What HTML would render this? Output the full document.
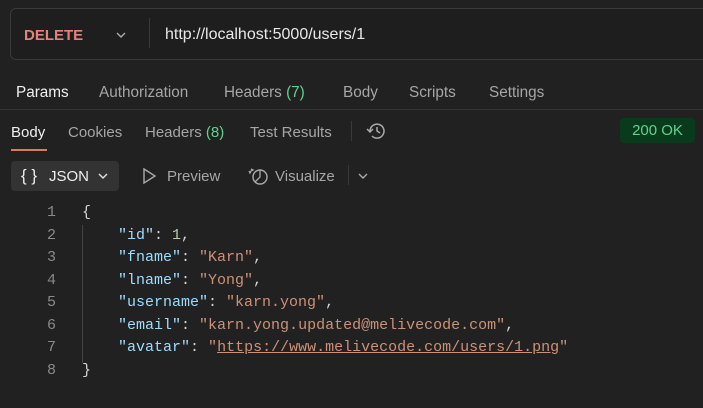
<!DOCTYPE html>
<html><head><style>
*{margin:0;padding:0;box-sizing:border-box}
body{width:703px;height:408px;background:#212121;font-family:"Liberation Sans",sans-serif;color:#a6a6a6;position:relative;overflow:hidden;font-size:15px}
.a{position:absolute;white-space:nowrap}
.urlbox{position:absolute;left:10px;top:8px;width:720px;height:52px;border:1px solid #3a3a3a;border-radius:6px;background:#1e1e1e}
.mono{font-family:"Liberation Mono",monospace;font-size:15px}
.ln{color:#8a8a8a;text-align:right;width:20px}
.k{color:#9cdcfe}.s{color:#ce9178}.n{color:#b5cea8}.p{color:#d4d4d4}
</style></head><body>
<div class="urlbox"></div>
<div class="a" style="left:24px;top:27px;color:#e5837a;font-weight:bold;font-size:15px">DELETE</div>
<svg class="a" style="left:115px;top:30px" width="12" height="10"><path d="M2 3l4 4 4-4" stroke="#aaa" fill="none" stroke-width="1.4"/></svg>
<div class="a" style="left:149px;top:18px;width:1px;height:30px;background:#3a3a3a"></div>
<div class="a" style="left:165px;top:26px;color:#e8e8e8;font-size:16px">http://localhost:5000/users/1</div>

<div class="a" style="left:16px;top:84px;color:#f0f0f0;font-size:15.3px">Params</div>
<div class="a" style="left:99px;top:84px;font-size:15.3px">Authorization</div>
<div class="a" style="left:224px;top:84px;font-size:15.3px">Headers <span style="color:#5fd38d">(7)</span></div>
<div class="a" style="left:343px;top:84px;font-size:15.3px">Body</div>
<div class="a" style="left:409px;top:84px;font-size:15.3px">Scripts</div>
<div class="a" style="left:489px;top:84px;font-size:15.3px">Settings</div>
<div class="a" style="left:0;top:109px;width:703px;height:1px;background:#333"></div>

<div class="a" style="left:11px;top:124px;color:#f0f0f0">Body</div>
<div class="a" style="left:11px;top:149px;width:36px;height:2px;background:#e0795a"></div>
<div class="a" style="left:68px;top:124px">Cookies</div>
<div class="a" style="left:145px;top:124px">Headers <span style="color:#5fd38d">(8)</span></div>
<div class="a" style="left:250px;top:124px">Test Results</div>
<div class="a" style="left:351px;top:121px;width:1px;height:20px;background:#3a3a3a"></div>
<svg class="a" style="left:366px;top:121px" width="22" height="20" viewBox="0 0 22 20"><path d="M4 10a7 7 0 1 1 2 5" stroke="#aaa" fill="none" stroke-width="1.5"/><path d="M1 8l3 3 3-3" stroke="#aaa" fill="none" stroke-width="1.5"/><path d="M11 6v4l3 2" stroke="#aaa" fill="none" stroke-width="1.5"/></svg>
<div class="a" style="left:620px;top:118px;width:75px;height:25px;background:#0a3a1c;border-radius:4px;color:#5fd38d;text-align:center;line-height:26px">200 OK</div>

<div class="a" style="left:11px;top:161px;width:108px;height:30px;background:#333;border-radius:4px"></div>
<div class="a" style="left:21px;top:166px;color:#eee;font-size:17px">{ }</div>
<div class="a" style="left:49px;top:168px;color:#eee;font-size:15px">JSON</div>
<svg class="a" style="left:97px;top:171px" width="12" height="10"><path d="M2 3l4 4 4-4" stroke="#ddd" fill="none" stroke-width="1.5"/></svg>
<svg class="a" style="left:141px;top:167px" width="16" height="18"><path d="M3 2l11 7-11 7z" stroke="#aaa" fill="none" stroke-width="1.4"/></svg>
<div class="a" style="left:167px;top:168px">Preview</div>
<svg class="a" style="left:248px;top:165px" width="22" height="22" viewBox="0 0 22 22"><circle cx="12" cy="12" r="7" stroke="#aaa" fill="none" stroke-width="1.4"/><path d="M12 5v7l-5 5M3 4l2 1-2 1-1 2-1-2" stroke="#aaa" fill="none" stroke-width="1.3"/></svg>
<div class="a" style="left:275px;top:168px">Visualize</div>
<div class="a" style="left:348px;top:165px;width:1px;height:20px;background:#3a3a3a"></div>
<svg class="a" style="left:357px;top:171px" width="12" height="10"><path d="M2 3l4 4 4-4" stroke="#aaa" fill="none" stroke-width="1.4"/></svg>

<div class="a" style="left:82px;top:225px;width:1px;height:138px;background:#444"></div>
<div class="a mono" style="left:36px;top:202px;line-height:22.5px">
<div class="ln">1</div><div class="ln">2</div><div class="ln">3</div><div class="ln">4</div><div class="ln">5</div><div class="ln">6</div><div class="ln">7</div><div class="ln">8</div>
</div>
<div class="a mono" style="left:82px;top:202px;line-height:22.5px;white-space:pre"><span class="p">{</span>
<span class="k">    "id"</span><span class="p">: </span><span class="n">1</span><span class="p">,</span>
<span class="k">    "fname"</span><span class="p">: </span><span class="s">"Karn"</span><span class="p">,</span>
<span class="k">    "lname"</span><span class="p">: </span><span class="s">"Yong"</span><span class="p">,</span>
<span class="k">    "username"</span><span class="p">: </span><span class="s">"karn.yong"</span><span class="p">,</span>
<span class="k">    "email"</span><span class="p">: </span><span class="s">"karn.yong.updated@melivecode.com"</span><span class="p">,</span>
<span class="k">    "avatar"</span><span class="p">: </span><span class="s">"<u>https://www.melivecode.com/users/1.png</u>"</span>
<span class="p">}</span></div>
</body></html>
